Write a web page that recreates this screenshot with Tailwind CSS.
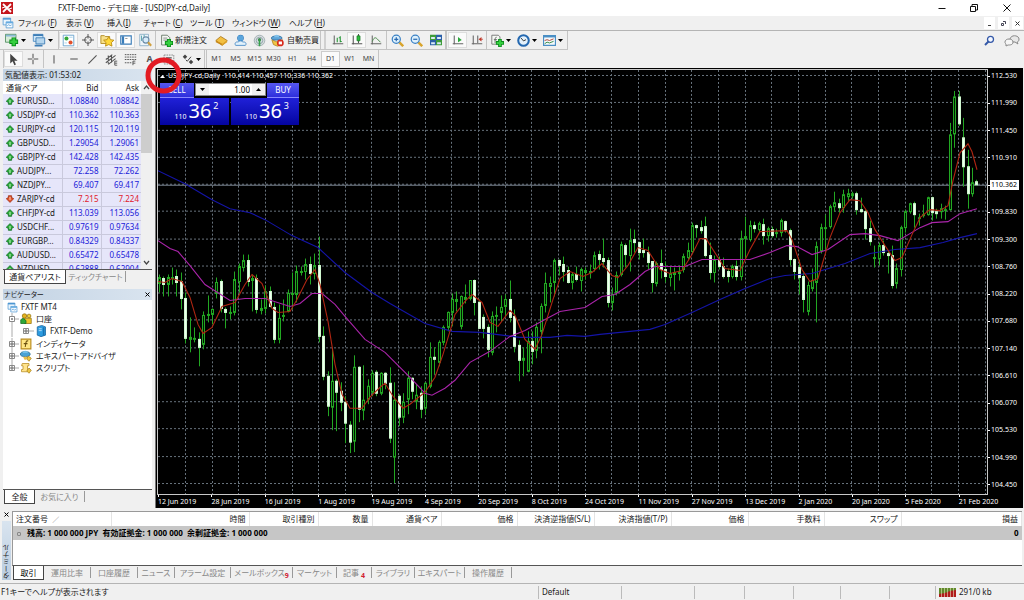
<!DOCTYPE html>
<html lang="ja">
<head>
<meta charset="utf-8">
<title>FXTF-Demo - デモ口座 - [USDJPY-cd,Daily]</title>
<script src="https://cdn.jsdelivr.net/npm/@tailwindcss/browser@4"></script>
</head>
<body class="h-screen overflow-hidden flex flex-col bg-[#f0f0f0] text-[8px] leading-[12px] text-[#1a1a1a] whitespace-nowrap font-['Noto_Sans','Noto_Sans_CJK_JP',sans-serif] [font-feature-settings:'palt']">

<svg class="hidden">
  <defs>
    <symbol id="i-up" viewBox="0 0 8 8"><path d="M4 .6 7.700 4.300 7 5H5.600V7.300H2.400V5H1L.3 4.300Z" fill="#2fae3c" stroke="#14702a" stroke-width=".8"/><path d="M4 3v3" stroke="#c9f5c9"/></symbol>
    <symbol id="i-down" viewBox="0 0 8 8"><path d="M4 7.400.3 3.700 1 3H2.400V.7H5.600V3H7L7.700 3.700Z" fill="#e2572e" stroke="#a03015" stroke-width=".8"/><path d="M4 2v3" stroke="#ffd2b8"/></symbol>
    <symbol id="i-windows" viewBox="0 0 16 16"><path d="M1.5 1.5h10v9h-10z" fill="#eaf5fd" stroke="#4a94d0"/><path d="M1.5 2.5h10" stroke="#4a94d0" stroke-width="2"/><path d="M5.500 6.500h9v8h-9z" fill="#f6fbff" stroke="#4a94d0"/><path d="M5.500 7.500h9" stroke="#63aae0" stroke-width="2"/><path d="M7 12l2-2 2 2 2-2" fill="none" stroke="#4a94d0"/></symbol>
    <symbol id="i-profiles" viewBox="0 0 16 16"><path d="M1.500 1.500h11v8h-11z" fill="#cfe6f7" stroke="#4a8cc4"/><path d="M4.500 5.500h10v7h-10z" fill="#b6d6ee" stroke="#3c7cb5"/><path d="M1.500 2.500h11M3 14.500h9" stroke="#3c7cb5" stroke-width="2"/></symbol>
    <symbol id="i-newchart" viewBox="0 0 16 16"><path d="M.5 1.500h12v9H.5z" fill="#d8ecd8" stroke="#4c8c5c"/><path d="M1 3h11" stroke="#8ab8d8" stroke-width="2"/><path d="M10 5v10M5 10h10" stroke="#0a8a1a" stroke-width="5"/><path d="M10 6v8M6 10h8" stroke="#35cf3f" stroke-width="3"/></symbol>
    <symbol id="i-market" viewBox="0 0 16 16"><path d="M1.500 1.500h13v13h-13z" fill="#fff" stroke="#5a9ac8"/><circle cx="5.500" cy="5.500" r="2.500" fill="#35a83a"/><circle cx="10.500" cy="10.500" r="2.500" fill="#e0502c"/><path d="M9 4h4M3 11h3" stroke="#9ccbe8"/></symbol>
    <symbol id="i-data" viewBox="0 0 16 16"><circle cx="8" cy="8" r="4.500" fill="none" stroke="#555" stroke-width="1.300"/><path d="M8 0v6M8 10v6M0 8h6M10 8h6" stroke="#555" stroke-width="1.300"/></symbol>
    <symbol id="i-star" viewBox="0 0 16 16"><path d="M1 3h4l1 1h5v8H1z" fill="#f7e08a" stroke="#b08a20"/><path d="m10 4 1.900 3.600 4 .6-2.900 2.800.7 4L10 13.200 6.300 15l.7-4-2.900-2.800 4-.6z" fill="#ffd83a" stroke="#b98a10"/></symbol>
    <symbol id="i-terminal" viewBox="0 0 16 16"><path d="M1 2.500h14v11H1z" fill="#fff" stroke="#3a7cb8" stroke-width="1.500"/><path d="M4 3v10" stroke="#3a7cb8" stroke-width="3"/><path d="M7 6h3" stroke="#777"/></symbol>
    <symbol id="i-tester" viewBox="0 0 16 16"><path d="M2 1.500h10v13H2z" fill="#eef5fa" stroke="#8eb0c8"/><path d="M4 3v6M7 2v5" stroke="#4ca0a8"/><circle cx="9" cy="8" r="3.500" fill="#d6ecfa" stroke="#6c8ca8" stroke-width="1.300"/><path d="m11.500 10.500 3.500 4" stroke="#d0a040" stroke-width="2.400"/></symbol>
    <symbol id="i-order" viewBox="0 0 16 16"><path d="M2 1.500h7l3 3v9H2z" fill="#f4f8f4" stroke="#5a6a5a"/><path d="M4 5h5M4 7.500h5" stroke="#777"/><path d="M11 6v10M6 11h10" stroke="#0a8a1a" stroke-width="5"/><path d="M11 7v8M7 11h8" stroke="#35cf3f" stroke-width="3"/></symbol>
    <symbol id="i-gold" viewBox="0 0 16 16"><path d="M1 8 7 3l8 5-6 6z" fill="#f3c041" stroke="#a8741a"/><path d="M1 8l8 4v2L1 10z" fill="#c88a1c"/><path d="M9 12l6-4v2l-6 4z" fill="#dca028"/></symbol>
    <symbol id="i-cloud" viewBox="0 0 16 16"><circle cx="8" cy="5" r="3.500" fill="#d5ebfa" stroke="#3a80c0" stroke-width="1.300"/><path d="M5 2h6v6H5z" fill="#5aa5dc"/><path d="M2 14c-2-3 1-5 3-4 1-2 5-2 6 0 3-1 5 2 3 4z" fill="#e2f1fb" stroke="#3a80c0"/></symbol>
    <symbol id="i-signal" viewBox="0 0 16 16"><circle cx="8" cy="8" r="6.500" fill="#d5dde0" stroke="#9aa6aa"/><circle cx="8" cy="8" r="4" fill="none" stroke="#8a9aa0"/><circle cx="8" cy="7" r="2" fill="#3e8c50"/><path d="M8 7v8" stroke="#35a04a" stroke-width="2"/></symbol>
    <symbol id="i-auto" viewBox="0 0 16 16"><path d="M1 7 8 10l6-3-1 6-5 2-5-2z" fill="#f1c545" stroke="#b08420"/><ellipse cx="7" cy="5" rx="6.500" ry="2.500" fill="#5da5d8" stroke="#2a6a9c"/><path d="M4 4c0-4 6-4 6 0" fill="#7fc0ea"/><circle cx="11.500" cy="11" r="4.200" fill="#d82a1c"/><path d="M9.500 9.200h4v3.600h-4z" fill="#fff"/></symbol>
    <symbol id="i-bars" viewBox="0 0 16 16"><path d="M3 2v12M1 13h14" stroke="#666" stroke-width="1.400"/><path d="M7 5v6M11 3v8M9 5h2M11 10h2" stroke="#2a9a3a" stroke-width="1.500"/></symbol>
    <symbol id="i-candle" viewBox="0 0 16 16"><path d="M3 2v12M1 13h14M10 0v12" stroke="#555" stroke-width="1.400"/><path d="M8 2.500h4v6.500H8z" fill="#2ebf3e" stroke="#167a24"/></symbol>
    <symbol id="i-line" viewBox="0 0 16 16"><path d="M3 2v12M1 13h14" stroke="#666" stroke-width="1.400"/><path d="M3 10c2-5 4-6 6-4l5 5" fill="none" stroke="#4a8a4a" stroke-width="1.300"/></symbol>
    <symbol id="i-zin" viewBox="0 0 16 16"><path d="m10 10 5 5" stroke="#d8a42c" stroke-width="3"/><circle cx="6.500" cy="6.500" r="5" fill="#ddf0fc" stroke="#3a80c4" stroke-width="1.500"/><path d="M6.500 4v5M4 6.500h5" stroke="#2a6ab0" stroke-width="1.500"/></symbol>
    <symbol id="i-zout" viewBox="0 0 16 16"><path d="m10 10 5 5" stroke="#d8a42c" stroke-width="3"/><circle cx="6.500" cy="6.500" r="5" fill="#ddf0fc" stroke="#3a80c4" stroke-width="1.500"/><path d="M4 6.500h5" stroke="#2a6ab0" stroke-width="1.500"/></symbol>
    <symbol id="i-tile" viewBox="0 0 16 16"><path d="M0 1h8v7H0zM8 8h8v7H8z" fill="#3e9c3a"/><path d="M8 1h8v7H8zM0 8h8v7H0z" fill="#2b5fa8"/><path d="M1.500 4h5v2.500h-5zM9.500 4h5v2.500h-5zM1.500 11h5v2.500h-5zM9.500 11h5v2.500h-5z" fill="#dcecf8"/></symbol>
    <symbol id="i-scroll" viewBox="0 0 16 16"><path d="M3 2v12M1 13h14" stroke="#666" stroke-width="1.400"/><path d="m8 4 5 4-5 3z" fill="#2aa83a"/></symbol>
    <symbol id="i-shift" viewBox="0 0 16 16"><path d="M3 2v12M1 13h14M9 2v10" stroke="#666" stroke-width="1.400"/><path d="m10 7 4-3v6z" fill="#c0392b"/><path d="M12 7h4" stroke="#c0392b"/></symbol>
    <symbol id="i-indic" viewBox="0 0 16 16"><path d="M1 1.500h8l2 2v9H1z" fill="#f4f8f4" stroke="#666"/><path d="M7 4c-2 0-2 1-2 7M3.500 7h4" fill="none" stroke="#555"/><path d="M11 6v10M6 11h10" stroke="#0a8a1a" stroke-width="4.500"/><path d="M11 7v8M7 11h8" stroke="#35cf3f" stroke-width="2.500"/></symbol>
    <symbol id="i-clock" viewBox="0 0 16 16"><circle cx="8" cy="8" r="6.500" fill="#e4f1fb" stroke="#2468b0" stroke-width="2.500"/><path d="M5 5l3 3.500L11 7" fill="none" stroke="#333" stroke-width="1.200"/></symbol>
    <symbol id="i-templ" viewBox="0 0 16 16"><path d="M.7 2h14.600v12H.7z" fill="#f4f9fc" stroke="#4a8ec4" stroke-width="1.400"/><path d="M1 3h14" stroke="#4a8ec4" stroke-width="2.500"/><path d="m2 8 3-1 3 1 5-2" fill="none" stroke="#b04a3a" stroke-width="1.200"/><path d="m2 12 3-2 3 1 5-2" fill="none" stroke="#3a8c4a" stroke-width="1.200"/></symbol>
    <symbol id="i-cursor" viewBox="0 0 16 16"><path d="M4 1v12l3-3 2 5 2-1-2-4.500h4z" fill="#444"/></symbol>
    <symbol id="i-cross" viewBox="0 0 16 16"><path d="M8 1v6M8 9v6M1 8h6M9 8h6" stroke="#555" stroke-width="1.400"/></symbol>
    <symbol id="i-vline" viewBox="0 0 16 16"><path d="M8 3v11" stroke="#555" stroke-width="1.400"/></symbol>
    <symbol id="i-hline" viewBox="0 0 16 16"><path d="M3 8h10" stroke="#555" stroke-width="1.400"/></symbol>
    <symbol id="i-trend" viewBox="0 0 16 16"><path d="M3 13 13 3" stroke="#555" stroke-width="1.400"/></symbol>
    <symbol id="i-channel" viewBox="0 0 16 16"><path d="m1 12 12-9M1 8l8-6M4 14l9-7M4 3v10M8 2v10" stroke="#555" stroke-width="1.300"/><path d="M15 10h-3v5h3M12 12.500h3" fill="none" stroke="#444"/></symbol>
    <symbol id="i-fibo" viewBox="0 0 16 16"><path d="M1 2h14M1 5h14M1 8h14M1 12h8" stroke="#555" stroke-width="1.200" stroke-dasharray="2 1"/><path d="M14 10h-3v5M11 12.500h3" fill="none" stroke="#444"/></symbol>
    <symbol id="i-label" viewBox="0 0 16 16"><path d="M2.500 2.500h12v11h-12z" fill="none" stroke="#777" stroke-dasharray="2 1"/><path d="M5 6h7M8.500 6v6" stroke="#555" stroke-width="1.400"/></symbol>
    <symbol id="i-arrows" viewBox="0 0 16 16"><path d="m1 5 3-3 3 3-3 3zM9 12l3-3 3 3-3 3z" fill="#444"/><path d="m5 9 2 2 5-6" fill="none" stroke="#444" stroke-width="1.300"/></symbol>
    <symbol id="i-account" viewBox="0 0 16 16"><circle cx="6" cy="4" r="3" fill="#e4b21c" stroke="#96700c"/><circle cx="12" cy="4" r="2.500" fill="#f0cc38" stroke="#96700c"/><path d="M6 7h9v7H6z" fill="#eec42c" stroke="#96700c"/><path d="M1 14V9l3-2 4 3v4z" fill="#2ea838" stroke="#146c20"/></symbol>
    <symbol id="i-server" viewBox="0 0 16 16"><path d="M3 2.500 9 .5l5 2v11L8 15.500l-5-2z" fill="#2c9be0" stroke="#14619c"/><path d="M5 5h4M5 7.500h4" stroke="#d6efff"/><path d="M11.500 3v11" stroke="#1873b4" stroke-width="2"/></symbol>
    <symbol id="i-f" viewBox="0 0 16 16"><path d="M1.500 1.500h13v13h-13z" fill="#ffe684" stroke="#b88a1c" stroke-width="1.500"/><path d="M11 4c-3-1-3 1-4 8M5 7.500h5" fill="none" stroke="#6c5010" stroke-width="1.400"/></symbol>
    <symbol id="i-hat" viewBox="0 0 16 16"><ellipse cx="7" cy="5.500" rx="6.500" ry="3.300" fill="#4aa3d6" stroke="#22678e"/><path d="M3.500 4c0-4 7-4 7 0" fill="#73bfe8"/><path d="M4 9h6l-2 4H6z" fill="#eac04c"/><path d="m11 8 4 3-3 4-3-3z" fill="#f0c840" stroke="#a8801c"/></symbol>
    <symbol id="i-script" viewBox="0 0 16 16"><path d="M3 2h9v3h-2v8H2v-3h2V5H2z" fill="#ffe48c" stroke="#b58a20"/><path d="m12 8 3 3-3 4-3-3z" fill="#f0c840" stroke="#a8801c"/></symbol>
  </defs>
</svg>

<header class="shrink-0">
  <div class="h-4 bg-white flex items-center">
    <svg class="ml-[1px] size-[12px]" viewBox="0 0 12 12"><path d="M0 0h12v12H0z" fill="#c4161c"/><path d="m2 2 8 8M10 2 2 10" stroke="#fff" stroke-width="1.800"/><path d="m1 6 3-1M8 7l3-1" stroke="#fff"/></svg>
    <h1 class="ml-[45px]">FXTF-Demo - デモ口座 - [USDJPY-cd,Daily]</h1>
    <div class="ml-auto flex items-center">
      <button aria-label="最小化" class="w-[32px] h-4 grid place-items-center"><svg class="size-[8px]" viewBox="0 0 8 8"><path d="M.5 4.500h7" stroke="#111"/></svg></button>
      <button aria-label="元に戻す" class="w-[32px] h-4 grid place-items-center"><svg class="size-[8px]" viewBox="0 0 8 8"><path d="M.5 2.500h5v5h-5zM2 2V.5h5.500V6H6" fill="none" stroke="#111"/></svg></button>
      <button aria-label="閉じる" class="w-[34px] h-4 grid place-items-center"><svg class="size-[8px]" viewBox="0 0 8 8"><path d="m.5.5 7 7m0-7-7 7" stroke="#111"/></svg></button>
    </div>
  </div>
  <nav class="h-[15px] flex items-center border-b border-[#b4b4b4]">
    <svg class="ml-[2px] mr-[4px] size-[12px]"><use href="#i-windows"/></svg>
    <div class="grid grid-cols-[48px_41px_36px_47px_42px_57px_40px] text-left">
      <button class="text-left">ファイル (<u>F</u>)</button><button class="text-left">表示 (<u>V</u>)</button><button class="text-left">挿入(<u>I</u>)</button><button class="text-left">チャート (<u>C</u>)</button><button class="text-left">ツール (<u>T</u>)</button><button class="text-left">ウィンドウ (<u>W</u>)</button><button class="text-left">ヘルプ (<u>H</u>)</button>
    </div>
    <div class="ml-auto mr-[1px] flex gap-[3px]">
      <button aria-label="チャートを最小化" class="w-[11px] h-3 bg-white grid place-items-center"><svg class="size-[5px]" viewBox="0 0 5 5"><path d="M1 4.500h3" stroke="#444"/></svg></button>
      <button aria-label="チャートを元に戻す" class="w-[11px] h-3 bg-white grid place-items-center"><svg class="size-[5px]" viewBox="0 0 5 5"><path d="M.5 2.500h2v2h-2zM2 .5h2.500V3" fill="none" stroke="#445"/></svg></button>
      <button aria-label="チャートを閉じる" class="w-[11px] h-3 bg-white grid place-items-center"><svg class="size-[5px]" viewBox="0 0 5 5"><path d="m.5.5 4 4m0-4-4 4" stroke="#333"/></svg></button>
    </div>
  </nav>

  <div class="h-[19px] flex items-center justify-between">
    <div class="h-full flex items-center border-b border-r border-[#c4c4c4]">
      <button aria-label="新規チャート" class="ml-[5px] w-[23px] flex items-center gap-[2px]"><svg class="size-[14px]"><use href="#i-newchart"/></svg><svg class="w-[5px] h-[3px]" viewBox="0 0 5 3"><path d="M0 0h5L2.500 3z"/></svg></button>
      <button aria-label="プロファイル" class="ml-[4px] w-[26px] flex items-center gap-[2px]"><svg class="size-[14px]"><use href="#i-profiles"/></svg><svg class="w-[5px] h-[3px]" viewBox="0 0 5 3"><path d="M0 0h5L2.500 3z"/></svg></button>
      <div class="flex h-full items-center border-l border-[#c4c4c4]">
        <button aria-label="気配値表示" class="w-[19px] h-4 grid place-items-center bg-[#fafafa] border border-[#ddd]"><svg class="size-[13px]"><use href="#i-market"/></svg></button>
        <button aria-label="データウィンドウ" class="w-[19px] grid place-items-center"><svg class="size-[12px]"><use href="#i-data"/></svg></button>
        <button aria-label="ナビゲーター" class="w-[19px] h-4 grid place-items-center bg-[#fafafa] border border-[#ddd]"><svg class="size-[14px]"><use href="#i-star"/></svg></button>
        <button aria-label="ターミナル" class="w-[19px] h-4 grid place-items-center bg-[#fafafa] border border-[#ddd]"><svg class="size-[12px]"><use href="#i-terminal"/></svg></button>
        <button aria-label="ストラテジーテスター" class="w-[19px] grid place-items-center"><svg class="size-[14px]"><use href="#i-tester"/></svg></button>
      </div>
      <button class="ml-[1px] pl-[4px] w-[57px] h-full flex items-center gap-[2px] border-l border-[#c4c4c4]"><svg class="size-[13px] shrink-0"><use href="#i-order"/></svg>新規注文</button>
      <button aria-label="MetaEditor" class="w-[19px] grid place-items-center"><svg class="size-[13px]"><use href="#i-gold"/></svg></button>
      <button aria-label="クラウド" class="w-[19px] grid place-items-center"><svg class="size-[13px]"><use href="#i-cloud"/></svg></button>
      <button aria-label="シグナル" class="w-[19px] grid place-items-center"><svg class="size-[13px]"><use href="#i-signal"/></svg></button>
      <button class="w-[52px] h-full pl-[2px] flex items-center gap-[3px] border-r border-[#c4c4c4]"><svg class="size-[13px] shrink-0"><use href="#i-auto"/></svg>自動売買</button>
      <div class="ml-[3px] pl-[2px] h-full flex items-center border-l-2 border-[#d0d0d0]">
        <button aria-label="バーチャート" class="w-[19px] grid place-items-center"><svg class="size-[12px]"><use href="#i-bars"/></svg></button>
        <button aria-label="ローソク足" class="w-[19px] h-4 grid place-items-center bg-[#fafafa] border border-[#ddd]"><svg class="size-[12px]"><use href="#i-candle"/></svg></button>
        <button aria-label="ラインチャート" class="w-[20px] grid place-items-center"><svg class="size-[12px]"><use href="#i-line"/></svg></button>
      </div>
      <div class="pl-[1px] h-full flex items-center border-l border-[#c4c4c4]">
        <button aria-label="拡大" class="w-[19px] grid place-items-center"><svg class="size-[13px]"><use href="#i-zin"/></svg></button>
        <button aria-label="縮小" class="w-[19px] grid place-items-center"><svg class="size-[13px]"><use href="#i-zout"/></svg></button>
        <button aria-label="整列" class="w-[19px] grid place-items-center"><svg class="size-[12px]"><use href="#i-tile"/></svg></button>
      </div>
      <div class="pl-[1px] h-full flex items-center border-l-2 border-[#c4c4c4]">
        <button aria-label="自動スクロール" class="w-[19px] h-4 grid place-items-center bg-[#fafafa] border border-[#ddd]"><svg class="size-[12px]"><use href="#i-scroll"/></svg></button>
        <button aria-label="チャートシフト" class="w-[19px] grid place-items-center"><svg class="size-[12px]"><use href="#i-shift"/></svg></button>
      </div>
      <div class="pl-[4px] h-full flex items-center border-l border-[#c4c4c4]">
        <button aria-label="インディケータ" class="w-[26px] flex items-center gap-[2px]"><svg class="size-[13px]"><use href="#i-indic"/></svg><svg class="w-[5px] h-[3px]" viewBox="0 0 5 3"><path d="M0 0h5L2.500 3z"/></svg></button>
        <button aria-label="時間足" class="w-[26px] flex items-center gap-[2px]"><svg class="size-[13px]"><use href="#i-clock"/></svg><svg class="w-[5px] h-[3px]" viewBox="0 0 5 3"><path d="M0 0h5L2.500 3z"/></svg></button>
        <button aria-label="定型チャート" class="w-[24px] flex items-center gap-[2px]"><svg class="size-[13px]"><use href="#i-templ"/></svg><svg class="w-[5px] h-[3px]" viewBox="0 0 5 3"><path d="M0 0h5L2.500 3z"/></svg></button>
      </div>
    </div>
    <div class="flex items-center gap-[9px] pr-[4px]">
      <button aria-label="検索"><svg class="block size-[11px]" viewBox="0 0 11 11"><path d="M5 6 1 10" stroke="#3458a8" stroke-width="2"/><circle cx="6.500" cy="4.300" r="3" fill="#f4f8ff" stroke="#3458a8" stroke-width="1.300"/></svg></button>
      <button aria-label="チャット"><svg class="block w-[16px] h-[12px]" viewBox="0 0 16 12"><path d="M6 5c0-6 9-5 9-1 0 2-1 3-2 3l1 2-3-2c-3 0-5 0-5-2z" fill="#e8e8e8" stroke="#888"/><path d="M1 7c0-4 8-4 8 0 0 3-3 3-5 3l-2 1 0-2C1 8 1 8 1 7z" fill="#f6f6f6" stroke="#888"/></svg></button>
    </div>
  </div>

  <div class="h-[18px] flex items-center">
    <div class="ml-[3px] h-full flex items-center border-l border-[#c4c4c4]">
      <button aria-label="カーソル" class="w-[19px] h-4 grid place-items-center bg-[#fafafa] border border-[#ddd]"><svg class="size-[13px]"><use href="#i-cursor"/></svg></button>
      <button aria-label="クロスヘア" class="w-[19px] grid place-items-center"><svg class="size-[12px]"><use href="#i-cross"/></svg></button>
    </div>
    <div class="ml-[1px] h-full flex items-center border-l border-[#c4c4c4]">
      <button aria-label="垂直線" class="w-[20px] grid place-items-center"><svg class="size-[12px]"><use href="#i-vline"/></svg></button>
      <button aria-label="水平線" class="w-[19px] grid place-items-center"><svg class="size-[12px]"><use href="#i-hline"/></svg></button>
      <button aria-label="トレンドライン" class="w-[19px] grid place-items-center"><svg class="size-[13px]"><use href="#i-trend"/></svg></button>
      <button aria-label="チャネル" class="w-[19px] grid place-items-center"><svg class="size-[13px]"><use href="#i-channel"/></svg></button>
      <button aria-label="フィボナッチ" class="w-[19px] grid place-items-center"><svg class="size-[13px]"><use href="#i-fibo"/></svg></button>
      <button class="w-[19px] text-center text-[9px] font-bold text-[#555]">A</button>
      <button aria-label="テキストラベル" class="w-[19px] grid place-items-center"><svg class="size-[13px]"><use href="#i-label"/></svg></button>
      <button aria-label="矢印" class="w-[26px] pl-[4px] flex items-center gap-[2px]"><svg class="size-[12px]"><use href="#i-arrows"/></svg><svg class="w-[5px] h-[3px]" viewBox="0 0 5 3"><path d="M0 0h5L2.500 3z"/></svg></button>
    </div>
    <div class="h-full flex items-center border-l-3 border-double border-r border-[#c4c4c4] text-[7px] text-[#444]">
      <button class="w-[19px] h-4">M1</button><button class="w-[19px] h-4">M5</button><button class="w-[19px] h-4">M15</button><button class="w-[19px] h-4">M30</button><button class="w-[19px] h-4">H1</button><button class="w-[19px] h-4">H4</button><button class="w-[19px] h-4 bg-[#fafafa] border border-[#ccc]">D1</button><button class="w-[19px] h-4">W1</button><button class="w-[19px] h-4">MN</button>
    </div>
  </div>
</header>

<main class="flex-1 min-h-0 flex">
  <aside class="w-[155px] shrink-0 flex flex-col pl-[3px] pr-[3px]">
    <section class="h-[217px] flex flex-col">
      <h2 class="h-[12px] mt-[1px] pl-[2px] bg-linear-to-r from-[#c3d3e4] to-[#d9e4ef]">気配値表示: 01:53:02</h2>
      <div class="flex-1 min-h-0 flex bg-white border-b border-[#555] overflow-hidden">
        <div class="flex-1 overflow-hidden">
          <table class="w-full table-fixed border-collapse">
            <colgroup><col class="w-[59px]"><col class="w-[39px]"><col class="w-[40px]"></colgroup>
            <thead><tr class="h-[13px]"><th class="font-normal text-left pl-[3px] p-0">通貨ペア</th><th class="font-normal text-right pr-[2px] p-0 border-l border-[#ddd]">Bid</th><th class="font-normal text-right pr-[2px] p-0 border-l border-[#ddd]">Ask</th></tr></thead>
            <tbody id="quotes"></tbody>
          </table>
        </div>
        <div class="w-[11px] bg-[#f0f0f0] flex flex-col items-center">
          <svg class="w-[7px] h-[13px]" viewBox="0 0 7 13"><path d="m1 8 2.500-3L6 8" fill="none" stroke="#444" stroke-width="1.200"/></svg>
          <div class="w-full h-[59px] bg-[#cdcdcd]"></div>
          <svg class="mt-auto w-[7px] h-[13px]" viewBox="0 0 7 13"><path d="m1 5 2.500 3L6 5" fill="none" stroke="#444" stroke-width="1.200"/></svg>
        </div>
      </div>
      <div class="h-[15px] flex pl-[1px] items-start">
        <button class="w-[62px] h-[14px] bg-white border border-t-0 border-[#444]">通貨ペアリスト</button>
        <button class="w-[60px] h-[11px] mt-[1px] text-[#888] border-r border-[#999]">ティックチャート</button>
      </div>
    </section>
    <section class="flex-1 min-h-0 flex flex-col pt-[4px] pb-[4px]">
      <h2 class="h-[11px] pl-[1px] flex items-center justify-between bg-linear-to-r from-[#c3d3e4] to-[#d9e4ef] text-[7px]">ナビゲーター<button aria-label="ナビゲーターを閉じる" class="mr-[1px] size-[7px]"><svg viewBox="0 0 7 7"><path d="m1.500 1.500 4 4m0-4-4 4" stroke="#000"/></svg></button></h2>
      <div class="flex-1 bg-white border-b border-[#555] pt-[1px]">
        <ul>
          <li class="h-[12px] flex items-center gap-[3px] pl-[4px]"><svg class="size-[11px]"><use href="#i-windows"/></svg>FXTF MT4</li>
          <li class="h-[12px] flex items-center gap-[4px] pl-[6px]"><svg class="w-[10px] h-[12px]" viewBox="0 0 10 12"><path d="M3 0v12M6 6h4" stroke="#aaa"/><path d="M.5 3.500h5v5h-5z" fill="#fff" stroke="#888"/><path d="M2 6h2" stroke="#333"/></svg><svg class="size-[12px] -ml-[3px]"><use href="#i-account"/></svg>口座</li>
          <li class="h-[12px] flex items-center pl-[6px]"><svg class="w-[26px] h-[12px]" viewBox="0 0 26 12"><path d="M3 0v12M20 6h5" stroke="#aaa"/><path d="M14.500 3.500h5v5h-5z" fill="#fff" stroke="#888"/><path d="M15 6h4M17 4v4" stroke="#666"/></svg><svg class="size-[12px] mr-[3px]"><use href="#i-server"/></svg>FXTF-Demo</li>
          <li class="h-[13px] flex items-center gap-[4px] pl-[6px]"><svg class="w-[10px] h-[12px]" viewBox="0 0 10 12"><path d="M3 0v12M6 6h4" stroke="#aaa"/><path d="M.5 3.500h5v5h-5z" fill="#fff" stroke="#888"/><path d="M1 6h4M3 4v4" stroke="#666"/></svg><svg class="size-[12px] -ml-[3px]"><use href="#i-f"/></svg>インディケータ</li>
          <li class="h-[12px] flex items-center gap-[4px] pl-[6px]"><svg class="w-[10px] h-[12px]" viewBox="0 0 10 12"><path d="M3 0v12M6 6h4" stroke="#aaa"/><path d="M.5 3.500h5v5h-5z" fill="#fff" stroke="#888"/><path d="M1 6h4M3 4v4" stroke="#666"/></svg><svg class="size-[12px] -ml-[3px]"><use href="#i-hat"/></svg>エキスパートアドバイザ</li>
          <li class="h-[12px] flex items-center gap-[4px] pl-[6px]"><svg class="w-[10px] h-[12px]" viewBox="0 0 10 12"><path d="M3 0v6M6 6h4" stroke="#aaa"/><path d="M.5 3.500h5v5h-5z" fill="#fff" stroke="#888"/><path d="M1 6h4M3 4v4" stroke="#666"/></svg><svg class="size-[12px] -ml-[3px]"><use href="#i-script"/></svg>スクリプト</li>
        </ul>
      </div>
      <div class="h-[14px] flex pl-[1px] items-start">
        <button class="w-[31px] h-[14px] bg-white border border-t-0 border-[#444]">全般</button>
        <button class="w-[50px] h-[11px] mt-[1px] text-[#888] border-r border-[#999]">お気に入り</button>
      </div>
    </section>
  </aside>

  <section class="relative flex-1 min-w-0 mr-[1px] bg-black border-l border-[#777] flex flex-col text-white text-[7px] leading-[10px] pl-[1px] pt-[1px]">
    <div class="flex-1 min-h-0 flex">
      <div class="flex-1 min-w-0 border border-[#c8c8c8]">
        <svg id="chart" class="block w-full h-full" viewBox="158 70 829 425" preserveAspectRatio="none" role="img" aria-label="USDJPY-cd 日足チャート"></svg>
      </div>
      <div id="prices" class="w-[35px] flex flex-col justify-between pt-[2px] pb-[5px]"></div>
    </div>
    <div id="dates" class="h-[13px] grid grid-cols-16 mr-[12px]"></div>

    <div class="absolute left-[4px] top-[3px] flex items-center gap-[3px]"><svg class="w-[5px] h-[3px]" viewBox="0 0 5 3"><path d="M0 3h5L2.500 0z" fill="#fff"/></svg>USDJPY-cd,Daily&nbsp; 110.414 110.457 110.336 110.362</div>
    <div class="absolute left-[4px] top-[15px] w-[139px] h-[42px] grid grid-cols-2 grid-rows-[15px_27px] gap-x-[2px] text-white">
      <div class="col-span-2 flex justify-between text-[8px]">
        <button class="w-[34px] bg-linear-to-b from-[#5656f0] to-[#2e2edc] border-b border-[#8888ff]">SELL</button>
        <div class="flex w-[71px] bg-white text-black h-[13px] border border-[#888]">
          <button aria-label="ロットを減らす" class="w-[13px] bg-[#f0f0f0] grid place-items-center"><svg class="w-[5px] h-[3px]" viewBox="0 0 5 3"><path d="M0 0h5L2.500 3z"/></svg></button>
          <input aria-label="ロット" value="1.00" class="flex-1 min-w-0 text-right pr-[2px] text-[8px]">
          <button aria-label="ロットを増やす" class="w-[13px] bg-[#f0f0f0] grid place-items-center"><svg class="w-[5px] h-[3px]" viewBox="0 0 5 3"><path d="M0 3h5L2.500 0z"/></svg></button>
        </div>
        <button class="w-[32px] bg-linear-to-b from-[#5656f0] to-[#2e2edc] border-b border-[#8888ff]">BUY</button>
      </div>
      <button aria-label="SELL 110.362" class="flex justify-end pr-[10px] items-end gap-[2px] bg-linear-to-b from-[#2020d8] to-[#0404a0]"><span class="leading-[16px]">110</span><span class="text-[20px] leading-[28px]">36</span><span class="text-[9px] self-start leading-[16px]">2</span></button>
      <button aria-label="BUY 110.363" class="flex justify-end pr-[10px] items-end gap-[2px] bg-linear-to-b from-[#2020d8] to-[#0404a0]"><span class="leading-[16px]">110</span><span class="text-[20px] leading-[28px]">36</span><span class="text-[9px] self-start leading-[16px]">3</span></button>
    </div>
    <svg class="absolute -left-[11px] -top-[11px] size-[37px]" viewBox="0 0 37 37"><circle cx="18.500" cy="18.500" r="15.500" fill="none" stroke="#e31b23" stroke-width="5"/></svg>
  </section>
</main>

<section class="shrink-0 h-[76px] flex pt-[3px] pr-[2px] border-b border-[#b4b4b4]">
  <div class="w-[12px] flex flex-col items-center">
    <button aria-label="ターミナルを閉じる" class="size-[7px]"><svg viewBox="0 0 7 7"><path d="m1.500 1.500 4 4m0-4-4 4" stroke="#000"/></svg></button>
    <h2 class="mt-[3px] w-[9px] flex-1 mb-[3px] bg-linear-to-b from-[#b9cce0] to-[#d9e4ef] [writing-mode:vertical-rl] rotate-180 text-[7px] leading-[9px] pt-[1px]">ターミナル</h2>
  </div>
  <div class="flex-1 min-w-0 flex flex-col">
    <div class="h-[55px] bg-white border-t border-l border-[#999] border-b border-b-[#555]">
      <table class="w-full table-fixed border-collapse">
        <colgroup><col class="w-[98px]"><col class="w-[138px]"><col class="w-[69px]"><col class="w-[54px]"><col class="w-[69px]"><col class="w-[76px]"><col class="w-[77px]"><col class="w-[77px]"><col class="w-[77px]"><col class="w-[76px]"><col class="w-[77px]"><col></colgroup>
        <thead><tr id="cols" class="h-[14px]"></tr></thead>
        <tbody><tr class="h-[14px] bg-[#c6c6c6] font-bold text-black"><td colspan="11" class="p-0 pl-[4px]"><span class="inline-block size-[4px] border border-[#888] rounded-[1px] mr-[6px] align-middle"></span>残高: 1 000 000 JPY&nbsp; 有効証拠金: 1 000 000&nbsp; 余剰証拠金: 1 000 000</td><td class="p-0 pr-[3px] text-right">0</td></tr></tbody>
      </table>
    </div>
    <div class="flex text-[#888] pl-[1px] h-[14px] items-start [&>button+button]:border-r [&>button+button]:border-[#999] [&>button+button]:h-[11px] [&>button+button]:mt-[1px]">
      <button class="w-[31px] h-[14px] bg-white border border-t-0 border-[#444] text-black">取引</button>
      <button class="w-[47px]">運用比率</button><button class="w-[47px]">口座履歴</button><button class="w-[37px]">ニュース</button><button class="w-[56px]">アラーム設定</button><button class="w-[62px]">メールボックス<sub class="text-[7px] font-bold text-[#d02030] leading-none">9</sub></button><button class="w-[44px]">マーケット</button><button class="w-[35px]">記事<sub class="text-[7px] font-bold text-[#d02030] leading-none"> 4</sub></button><button class="w-[43px]">ライブラリ</button><button class="w-[50px]">エキスパート</button><button class="w-[47px]">操作履歴</button>
    </div>
  </div>
</section>

<footer class="shrink-0 h-4 flex items-center">
  <div class="flex-1 pl-[1px]">F1キーでヘルプが表示されます</div>
  <div class="w-[83px] h-[13px] pl-[3px] border-l border-[#bbb]">Default</div>
  <div class="w-[73px] h-[13px] border-l border-[#bbb]"></div>
  <div class="w-[50px] h-[13px] border-l border-[#bbb]"></div>
  <div class="w-[49px] h-[13px] border-l border-[#bbb]"></div>
  <div class="w-[47px] h-[13px] border-l border-[#bbb]"></div>
  <div class="w-[49px] h-[13px] border-l border-[#bbb]"></div>
  <div class="w-[46px] h-[13px] border-l border-[#bbb]"></div>
  <div class="w-[89px] h-[13px] pl-[3px] border-l border-[#bbb] flex items-center gap-[3px]"><svg class="w-[17px] h-[9px]" viewBox="0 0 17 9"><path d="M0 0h17v9H0z" fill="#5f8a2a"/><path d="M0 9V6l6-1 5-2 6-1v7z" fill="#b01c1c"/><path d="M2.500 0v9M5.500 0v9M8.500 0v9M11.500 0v9M14.500 0v9" stroke="#e8e0c0" stroke-width=".6"/></svg>291/0 kb</div>
</footer>

<script>
const quotes = [["EURUSD...","1.08840","1.08842"],["USDJPY-cd","110.362","110.363"],["EURJPY-cd","120.115","120.119"],["GBPUSD...","1.29054","1.29061"],["GBPJPY-cd","142.428","142.435"],["AUDJPY...","72.258","72.262"],["NZDJPY...","69.407","69.417"],["ZARJPY-cd","7.215","7.224",1],["CHFJPY-cd","113.039","113.056"],["USDCHF...","0.97619","0.97634"],["EURGBP...","0.84329","0.84337"],["AUDUSD...","0.65472","0.65478"],["NZDUSD...","0.62888","0.62904"]];
document.getElementById("quotes").innerHTML = quotes.map(([s, b, a, down]) =>
  `<tr class="h-[14px] bg-[#e6e6fa] border-b border-[#c9c9dc] ${down ? "text-[#e0202c]" : "text-[#2020d8]"}"><td class="p-0 pl-[3px] text-[#1a1a1a]"><span class="flex items-center gap-[3px]"><svg class="size-[8px] shrink-0"><use href="${down ? "#i-down" : "#i-up"}"/></svg>${s}</span></td><td class="p-0 pr-[2px] text-right border-l border-[#c9c9dc]">${b}</td><td class="p-0 pr-[2px] text-right border-l border-[#c9c9dc]">${a}</td></tr>`).join("");

document.getElementById("cols").innerHTML = ["注文番号 &nbsp;<span class='text-[#888] text-[7px]'>∕</span>","時間","取引種別","数量","通貨ペア","価格","決済逆指値(S/L)","決済指値(T/P)","価格","手数料","スワップ","損益"].map((t, i) =>
  `<th class="p-0 font-normal border-r border-[#e4e4e4] ${i ? "text-right pr-[3px]" : "text-left pl-[3px]"}">${t}</th>`).join("");

document.getElementById("prices").innerHTML = ["112.530","111.990","111.450","110.910","110.362","109.830","109.300","108.760","108.220","107.680","107.140","106.610","106.070","105.530","104.990","104.450"].map((p, i) =>
  `<div class="h-[10px] flex items-center"><span class="w-[2px] h-px bg-white"></span><span class="pl-px pr-[2px] ${i === 4 ? "bg-white text-black" : ""}">${p}</span></div>`).join("");

document.getElementById("dates").innerHTML = ["12 Jun 2019","28 Jun 2019","16 Jul 2019","1 Aug 2019","19 Aug 2019","4 Sep 2019","20 Sep 2019","8 Oct 2019","24 Oct 2019","11 Nov 2019","27 Nov 2019","13 Dec 2019","2 Jan 2020","20 Jan 2020","5 Feb 2020","21 Feb 2020"].map(d =>
  `<div class="min-w-0 pl-px"><div class="w-px h-[2px] bg-white"></div>${d}</div>`).join("");

// direction (u = hollow, d = filled), high, body top, body bottom, low
const bars = `u275,278,284,293 d277,279,285,297 u275,278,285,297 u268,278,279,285 d270,277,283,297 d273,282,299,310 d293,299,339,344 u318,338,340,353 u328,339,340,343 d333,340,348,367
u312,316,345,350 u296,315,316,323 u309,310,315,325 u278,283,294,299 d280,282,309,313 d308,310,313,329 u307,313,314,320 u272,280,313,316 u264,267,282,293 u255,261,268,272
d255,261,282,287 u275,279,281,312 d275,279,310,314 u300,309,311,315 u286,292,309,314 d287,292,307,308 d303,308,340,344 u305,319,340,344 u300,316,317,322 u290,294,312,313
u273,294,295,310 u266,272,295,303 u267,272,273,276 u259,265,272,280 d257,265,274,285 u254,266,274,280 d237,266,337,343 d327,337,377,381 d372,377,407,417 u350,382,408,431
d380,382,393,432 d383,392,403,412 d397,403,424,444 d422,426,443,454 u356,368,442,453 d367,368,410,423 u366,401,411,421 u380,387,400,405 u371,374,393,397 d371,373,394,397
u373,374,394,396 d373,374,384,390 d368,384,439,444 u383,401,458,484 d395,397,418,427 u394,403,418,424 u372,379,400,415 d378,379,392,400 u385,396,402,410 d387,394,410,419
u383,384,409,415 u343,358,387,389 d348,358,360,375 u341,343,363,367 u326,328,343,346 u312,313,328,332 u294,300,313,327 u292,300,302,312 u296,297,327,330 u285,298,300,304
u281,281,299,301 d280,281,303,316 d300,303,329,329 d315,318,329,339 d325,328,350,358 u312,317,353,356 u307,316,317,333 u296,308,313,322 u295,300,307,317 d281,300,318,323
d310,317,347,353 d341,346,361,382 u348,359,361,377 u332,342,372,373 d332,342,352,365 u323,328,351,359 u304,307,332,354 u273,284,306,313 u277,284,287,303 u259,261,283,297
d260,261,266,276 d257,265,272,282 d267,271,283,284 u273,275,283,290 d267,275,280,282 u268,270,281,292 u268,271,273,280 u265,272,273,279 u252,256,269,272 d251,255,260,270
d239,259,262,268 d258,261,303,308 u288,295,303,311 u272,276,293,296 u242,245,275,277 d244,246,255,268 u229,241,256,272 d230,240,243,253 d242,243,253,260 d239,251,253,258
d247,253,263,270 d262,262,283,293 u262,264,284,287 d250,264,270,279 d262,270,277,283 u267,274,278,287 u268,273,275,291 u266,273,274,281 u254,257,270,273 u243,251,258,260
u223,226,252,254 d225,226,228,238 d221,228,231,234 d217,227,256,258 d243,256,273,280 u256,260,273,283 d257,261,267,270 d258,267,277,279 d269,272,277,283 u265,267,277,279
d261,267,277,281 u231,239,277,281 u217,237,239,260 u221,226,240,242 d222,226,229,233 u222,224,230,233 d219,225,236,245 u227,229,236,242 d227,230,236,238 u229,233,234,238
u219,221,233,237 d221,222,231,233 d229,231,260,266 d259,260,272,280 d260,268,278,295 d273,277,300,313 u282,286,312,316 u269,281,289,292 u242,247,283,323 u224,228,251,254
u215,228,229,250 u205,207,227,229 u192,203,207,212 d199,204,208,213 u190,195,208,213 u189,194,197,201 u192,194,196,199 d192,194,210,215 d198,210,212,213 d210,212,229,240
d221,229,242,246 u246,258,259,268 u243,246,259,266 d241,246,253,256 d252,254,256,274 d246,256,286,289 u264,269,284,289 u226,228,270,277 u210,212,228,233 u203,204,212,214
d202,204,215,228 u214,218,219,226 u205,215,216,218 u197,198,215,216 d197,198,213,221 d209,212,214,219 u204,209,212,219 u206,210,211,220 u123,135,210,211 u91,97,134,148
d91,97,124,126 d118,138,167,187 d150,167,194,209 u168,183,194,197 d180,182,185,186`.split(/\s+/);

const averages = {
  "#1414a8": "158,171 185,184 212,200 230,209 250,213 265,220 292,236 318,248 345,273 372,293 390,304 425,324 452,332 480,333 520,338 550,338 567,336 585,337 600,335 650,330 665,325 692,313 720,300 745,289 770,279 785,276 812,274 845,264 870,254 895,250 920,248 943,243 960,238 977,234",
  "#aa24aa": "158,241 170,249 178,252 190,266 205,285 230,301 245,299 265,299 290,307 300,304 312,294 322,294 335,305 345,317 365,340 385,353 410,378 425,394 432,396 445,389 455,381 470,363 490,352 510,337 525,331 545,320 560,312 585,308 602,297 615,295 630,285 645,272 655,267 685,267 702,260 750,260 770,253 787,246 797,247 812,255 828,250 850,235 865,234 880,236 898,241 920,228 932,223 948,222 960,214 977,209",
  "#b02612": "158,282 165,283 172,279 182,282 190,298 198,325 203,334 212,328 222,307 235,303 245,285 252,275 262,284 272,309 278,313 290,312 297,300 307,280 315,270 320,285 328,322 335,365 342,395 350,409 362,409 370,398 380,388 385,384 393,397 403,409 410,405 425,393 435,378 443,355 455,315 465,302 472,295 482,303 490,323 498,327 510,311 515,316 525,340 535,350 542,335 553,300 560,279 570,272 583,277 592,273 602,264 612,276 618,278 628,266 638,248 648,251 660,270 670,274 682,271 692,255 700,239 706,239 718,258 725,269 740,271 750,250 760,232 787,231 792,240 802,270 810,282 818,279 830,238 840,213 850,200 860,201 868,213 875,230 885,246 895,261 902,258 912,235 920,218 930,210 940,211 948,206 953,181 960,153 968,144 972,152 977,170"
};

let out = "";
for (let k = 1; k < 32; k++) { const x = Math.floor(158.7 + k * 26.66) + .5; out += `<path d="M${x} 70V495" stroke="#68737d" stroke-dasharray="2 2"/>`; }
for (let k = 0; k < 16; k++) { const y = Math.floor(75.7 + k * 27.24) + .5; out += `<path d="M158 ${y}H987" stroke="#68737d" stroke-dasharray="2 2"/>`; }
out += `<path d="M158 185.500H987" stroke="#7c8894"/>`;
bars.forEach((b, i) => {
  const [h, t, l, low] = b.slice(1).split(",").map(Number), x = Math.round(158.7 + i * 4.444), up = b[0] === "u";
  out += `<path d="M${x + .5} ${h}V${low}" stroke="#22a822"/><rect x="${x - 1 + .5}" y="${t}" width="2" height="${Math.max(l - t, 1)}" fill="${up ? "#021802" : "#f0fff0"}" stroke="${up ? "#22a822" : "#d0f8d0"}"/>`;
});
for (const [c, p] of Object.entries(averages)) out += `<polyline points="${p}" fill="none" stroke="${c}" stroke-width="1.100"/>`;
document.getElementById("chart").innerHTML = out;
</script>
</body>
</html>
